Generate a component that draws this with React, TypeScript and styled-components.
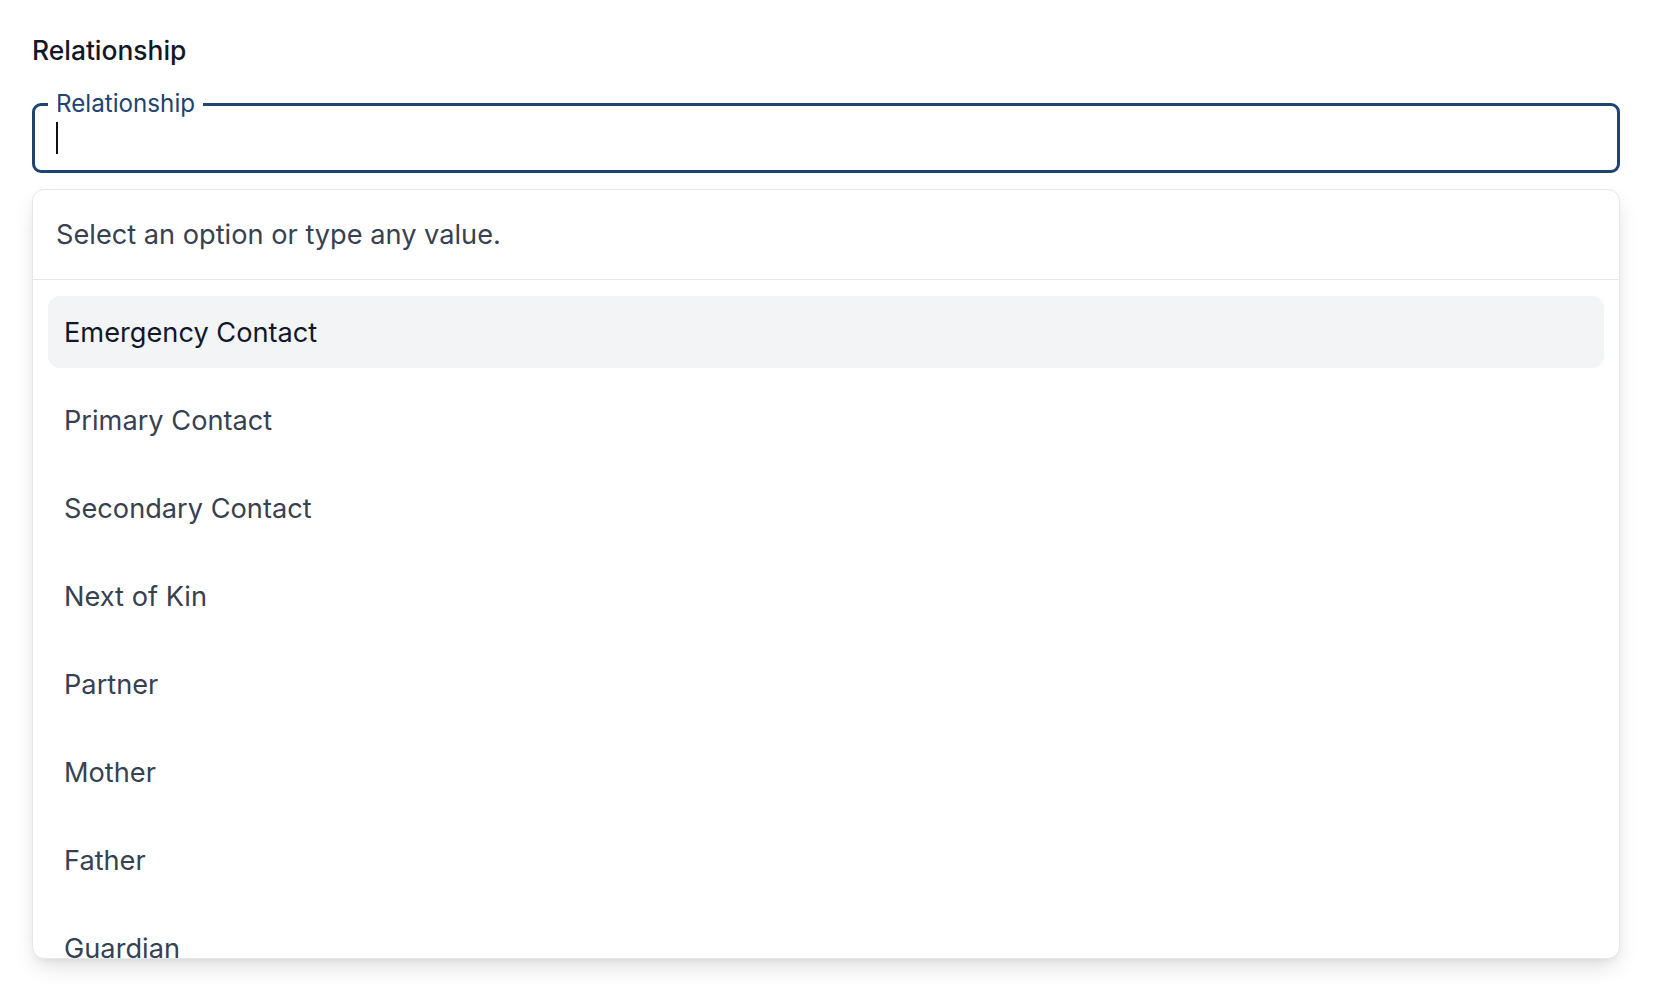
import React from "react";
import styled, { createGlobalStyle } from "styled-components";

const GlobalStyle = createGlobalStyle`
  html, body {
    margin: 0;
    padding: 0;
    background: #ffffff;
  }
  body {
    font-family: Inter, "Noto Sans", "Liberation Sans", sans-serif;
    -webkit-font-smoothing: antialiased;
  }
  * { box-sizing: border-box; }
`;

const Page = styled.div`
  display: flex;
  flex-direction: column;
  padding: 32px 38px 0 32px;
  height: 996px;
  overflow: hidden;
`;

const Title = styled.div`
  font-size: 26.4px;
  line-height: 36px;
  font-weight: 500;
  color: #111827;
`;

const Field = styled.div`
  position: relative;
  margin-top: 35px;
  height: 70px;
  border: 3px solid #1e4471;
  border-radius: 9px;
  padding-left: 21px;
  display: flex;
  align-items: center;
`;

const FloatingLabel = styled.span`
  position: absolute;
  top: -14px;
  left: 13px;
  padding: 0 8px;
  background: #ffffff;
  font-size: 24.2px;
  line-height: 24px;
  color: #1e4471;
`;

const Caret = styled.span`
  display: block;
  width: 2px;
  height: 32px;
  background: #111111;
`;

const Panel = styled.div`
  margin-top: 16px;
  height: 770px;
  border: 1px solid #e5e7eb;
  border-radius: 12px;
  background: #ffffff;
  box-shadow: 0 10px 22px -4px rgba(0, 0, 0, 0.14), 0 4px 8px -4px rgba(0, 0, 0, 0.08);
  display: flex;
  flex-direction: column;
  overflow: hidden;
`;

const Hint = styled.div`
  flex: none;
  height: 90px;
  padding-left: 23px;
  display: flex;
  align-items: center;
  border-bottom: 1px solid #e5e7eb;
  font-size: 27.2px;
  color: #374151;
`;

const List = styled.div`
  flex: 1;
  min-height: 0;
  overflow: hidden;
  padding: 16px 15px;
  display: flex;
  flex-direction: column;
  gap: 16px;
`;

const Option = styled.div<{ $active?: boolean }>`
  flex: none;
  height: 72px;
  padding-left: 16px;
  display: flex;
  align-items: center;
  border-radius: 12px;
  font-size: 27.2px;
  color: ${(p) => (p.$active ? "#111827" : "#374151")};
  background: ${(p) => (p.$active ? "#f3f4f6" : "transparent")};
`;

const options = [
  "Emergency Contact",
  "Primary Contact",
  "Secondary Contact",
  "Next of Kin",
  "Partner",
  "Mother",
  "Father",
  "Guardian",
];

export default function App() {
  return (
    <>
      <GlobalStyle />
      <Page>
        <Title>Relationship</Title>
        <Field>
          <FloatingLabel>Relationship</FloatingLabel>
          <Caret />
        </Field>
        <Panel>
          <Hint>Select an option or type any value.</Hint>
          <List>
            {options.map((o, i) => (
              <Option key={o} $active={i === 0}>
                {o}
              </Option>
            ))}
          </List>
        </Panel>
      </Page>
    </>
  );
}
